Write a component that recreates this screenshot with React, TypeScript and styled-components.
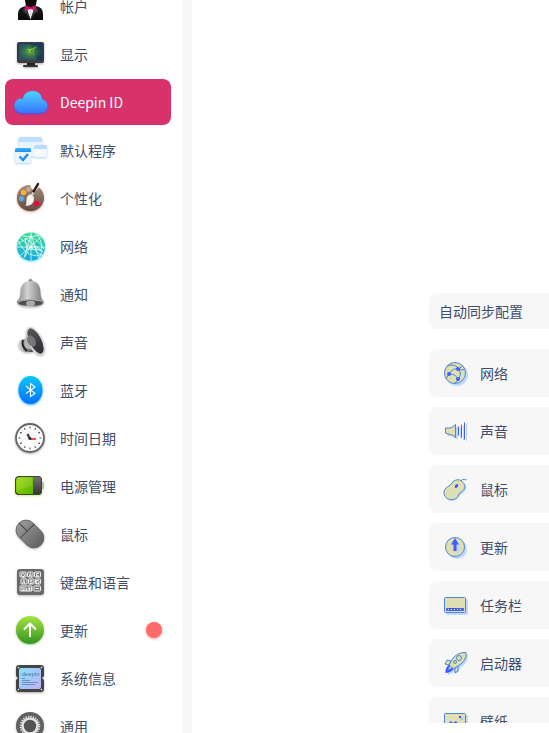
import React from "react";
import styled, { createGlobalStyle } from "styled-components";

const GlobalStyle = createGlobalStyle`
  * { box-sizing: border-box; }
  body {
    margin: 0;
    background: #fff;
    color: #414d68;
    font-family: "Noto Sans CJK SC", "Noto Sans", sans-serif;
    font-size: 14px;
    line-height: 19px;
  }
`;

const Page = styled.div`
  display: flex;
  height: 100vh;
  overflow: hidden;
`;

const Sidebar = styled.nav`
  flex: 0 0 192px;
  padding: 0 11px 0 5px;
  border-right: 10px solid #f7f7f7;
  overflow: hidden;
`;

const ModuleList = styled.ul`
  display: flex;
  flex-direction: column;
  gap: 2px;
  margin: -17px 0 0;
  padding: 0;
  list-style: none;
`;

const ModuleButton = styled.button<{ $active: boolean }>`
  display: flex;
  align-items: center;
  gap: 12px;
  width: 100%;
  height: 46px;
  padding: 0 9px 0 7px;
  border: 0;
  border-radius: 8px;
  background: ${(p) => (p.$active ? "#d9326b" : "transparent")};
  color: ${(p) => (p.$active ? "#fff" : "inherit")};
  font: inherit;
  text-align: left;
`;

const ModuleIcon = styled.svg`
  flex: none;
  width: 36px;
  height: 36px;
  overflow: visible;
`;

const Shaded = styled.g<{ $shadow: string }>`
  filter: drop-shadow(0 1px 1px ${(p) => p.$shadow});
`;

const Badge = styled.span`
  width: 16px;
  height: 16px;
  margin-left: auto;
  border-radius: 50%;
  background: #ff6a6a;
  box-shadow: 0 1px 3px #ff6a6a99;
`;

const Content = styled.main`
  flex: 1;
  min-width: 0;
  padding: 293px 0 0 237px;
  margin-bottom: 10px;
  overflow: hidden;
`;

const SyncTitle = styled.h2`
  display: flex;
  align-items: center;
  height: 36px;
  margin: 0 0 20px;
  padding: 0 10px;
  border-radius: 8px 0 0 8px;
  background: #f7f7f7;
  font-size: 14px;
  font-weight: 400;
  white-space: nowrap;
`;

const SyncList = styled.ul`
  display: flex;
  flex-direction: column;
  gap: 10px;
  margin: 0;
  padding: 0;
  list-style: none;
`;

const SyncRow = styled.li`
  display: flex;
  align-items: center;
  gap: 12px;
  height: 48px;
  padding-left: 15px;
  border-radius: 8px 0 0 8px;
  background: #f7f7f7;
  white-space: nowrap;
`;

const SyncIcon = styled.svg`
  flex: none;
  width: 24px;
  height: 24px;
  overflow: visible;
`;

type GradientProps = { id: string; from: string; to: string; diagonal?: boolean };

const Gradient = ({ id, from, to, diagonal }: GradientProps) => (
  <linearGradient id={id} x1="0" y1="0" x2={diagonal ? "1" : "0"} y2="1">
    <stop stopColor={from} />
    <stop offset="1" stopColor={to} />
  </linearGradient>
);

const AccountArt = (
  <g>
    <Gradient id="suit" from="#333" to="#080808" />
    <path d="M13 4h12v8q-1 4-1 6 7 1 7 8v6H6v-6q0-7 8-8 0-3-1-6z" fill="url(#suit)" />
    <path d="M14.500 20L18.500 31.500 22.500 20z" fill="#eee" />
    <path d="M12 20l-1 4 3 1 4.500 7-4-12zM25 20l1 4-3 1-4.500 7 4-12z" fill="#3a3a3a" />
    <path d="M13 17v6l5.500-2 5.500 2v-6l-5.500 2z" fill="#d90f69" />
    <path d="M13 12h11l-1 5-4.500 2.500L14 17z" fill="#0c0c0c" />
    <path d="M18.500 23v5" stroke="#aaa" strokeWidth="1" strokeDasharray="1 2" />
  </g>
);

const DisplayArt = (
  <Shaded $shadow="#0005">
    <radialGradient id="screen">
      <stop stopColor="#5da23c" />
      <stop offset=".5" stopColor="#2b6b43" />
      <stop offset="1" stopColor="#1b3a5c" />
    </radialGradient>
    <path d="M15 26h8v3h-8z" fill="#222" />
    <rect x="11" y="29" width="15" height="2" rx="1" fill="#333" />
    <rect x="5" y="6" width="27" height="21" rx="2" fill="#3b3d3f" />
    <rect x="6.500" y="7.500" width="24" height="16.500" fill="url(#screen)" />
    <path d="M7 8h11l7 16H7z" fill="#a5ed8d" opacity=".13" />
    <path d="M25 10l-4 5 1 5-3-4-4 1 3-2-4-2 5 0z" fill="#83c83f" />
    <path d="M24 10l-4 5 2 5-3-5z" fill="#26343e" />
  </Shaded>
);

const CloudArt = (
  <Shaded $shadow="#315bea">
    <Gradient id="cloud" from="#4bd6fb" to="#3974ff" />
    <path d="M9 29a7.300 7.300 0 0 1-.5-14.500q1 0 2.500.3C11.500 10 15.500 7 20.500 7c5.500 0 9 3 9.700 8.200A7 7 0 0 1 28.500 29z" fill="url(#cloud)" />
  </Shaded>
);

const DefaultAppsArt = (
  <Shaded $shadow="#75b8ed99">
    <Gradient id="tick-bar" from="#38b4ff" to="#208cf7" />
    <rect x="6.500" y="5" width="23.500" height="19" rx="2" fill="#eaf4ff" />
    <path d="M6.500 10V7a2 2 0 0 1 2-2H28a2 2 0 0 1 2 2v3z" fill="#bddfff" />
    <rect x="22" y="13" width="13" height="12" rx="1.500" fill="#f4f8ff" />
    <path d="M22 17v-2.500a1.500 1.500 0 0 1 1.500-1.500h10a1.500 1.500 0 0 1 1.500 1.500V17z" fill="#b9dcff" />
    <rect x="3" y="16" width="16" height="15" rx="1.500" fill="#e9f4ff" />
    <path d="M3 20v-2.500A1.500 1.500 0 0 1 4.500 16h13a1.500 1.500 0 0 1 1.500 1.500V20z" fill="url(#tick-bar)" />
    <path d="M7.500 24.500l3.500 3.500 5-6" fill="none" stroke="#158ff8" strokeWidth="2.300" />
  </Shaded>
);

const PaletteArt = (
  <Shaded $shadow="#b4483099">
    <Gradient id="wood" from="#a88d78" to="#604b40" />
    <path d="M18 5C10 5 5 10.500 5 18c0 7.500 6 13 13.500 13S32 25 32 18c0-5-2-8-5-10.500-2 3-4 4-6 2.500q-3-2-3-5z" fill="url(#wood)" />
    <circle cx="11.500" cy="12.500" r="2.700" fill="#f5b52d" />
    <circle cx="16.500" cy="9.500" r="2.400" fill="#c9a793" />
    <circle cx="9.500" cy="18.500" r="2.600" fill="#58aaf2" />
    <circle cx="24.500" cy="23.500" r="2.700" fill="#e10b40" />
    <path d="M26 4l-6 10" stroke="#181818" strokeWidth="2.200" strokeLinecap="round" />
    <path d="M21.500 12.500l-2 3" stroke="#ccc" strokeWidth="2.500" />
    <path d="M17.500 14.500q4 .5 4.500 3.500c0 5-3 8-8.500 8q1-2 1-6 0-4 3-5.500z" fill="#f5f1ed" />
  </Shaded>
);

const NetworkArt = (
  <Shaded $shadow="#62dfe9">
    <Gradient id="globe" from="#3cdf92" to="#12a7e5" />
    <clipPath id="globe-edge"><circle cx="19" cy="18.500" r="14" /></clipPath>
    <circle cx="19" cy="18.500" r="14" fill="url(#globe)" />
    <g clipPath="url(#globe-edge)" fill="none" stroke="#e6fff5" strokeWidth=".8">
      <path d="M5 19h28M19 4v29M19 7l-7 23M19 7l8 24M8 10l22 18M30 8L8 28M10 8q14-1 22 13M5 17q10-9 25-10M6 13q10 20 26 13M22 4q13 10 5 27M13 10l16 12-14-1zM13 29l6-12 12 7" />
    </g>
    <circle cx="19" cy="19" r="1.500" fill="#fff" />
  </Shaded>
);

const BellArt = (
  <Shaded $shadow="#0004">
    <linearGradient id="bell">
      <stop stopColor="#898989" />
      <stop offset=".4" stopColor="#d2d2d2" />
      <stop offset="1" stopColor="#777" />
    </linearGradient>
    <circle cx="18.500" cy="5" r="2" fill="#888" />
    <path d="M18.500 5C11 5 8.500 10 8.500 17q0 5-3.500 8v2q3 4 13.500 4t13-4v-2q-3-3-3-8c0-7-2.500-12-10-12z" fill="url(#bell)" />
    <ellipse cx="18.500" cy="27" rx="12" ry="3" fill="#4d4d4d" />
    <ellipse cx="18.500" cy="27.500" rx="4.500" ry="3" fill="#aaa" />
    <path d="M6 25q12-3 25 0" fill="none" stroke="#aaa" />
  </Shaded>
);

const SoundArt = (
  <Shaded $shadow="#0005">
    <linearGradient id="magnet">
      <stop stopColor="#ddd" />
      <stop offset=".6" stopColor="#888" />
      <stop offset="1" stopColor="#333" />
    </linearGradient>
    <Gradient id="cone" from="#55575a" to="#2c2d2f" />
    <path d="M13 15l-5 1q-3 5 0 9l5 3 8 0z" fill="url(#magnet)" />
    <path d="M11 16q-2 6 4 11" fill="none" stroke="#222" strokeWidth="2" />
    <path d="M16.500 4q-3 7-3.500 14-1 4 1 6 8 2 15 6z" fill="#b5b5b5" />
    <ellipse cx="23.500" cy="17" rx="6.500" ry="14.500" transform="rotate(-27 23.500 17)" fill="url(#cone)" stroke="#ddd" strokeWidth="1.300" />
    <ellipse cx="19.500" cy="17" rx="4" ry="6" transform="rotate(-27 19.500 17)" fill="#75777a" />
  </Shaded>
);

const BluetoothArt = (
  <Shaded $shadow="#35a9ff">
    <Gradient id="tooth" from="#08c8fb" to="#0870ff" />
    <ellipse cx="18.500" cy="18" rx="12" ry="14" fill="url(#tooth)" />
    <path d="M14 14l9 7.500-4.500 3v-13L23 15l-9 6.500" fill="none" stroke="#fff" strokeWidth="1.100" />
  </Shaded>
);

const ClockArt = (
  <Shaded $shadow="#0005">
    <circle cx="18" cy="18" r="14" fill="#fbfbfb" stroke="#666" strokeWidth="1.800" />
    {Array.from({ length: 12 }, (_, i) => (
      <path key={i} d="M18 6.500v2" stroke="#444" strokeWidth=".9" transform={`rotate(${i * 30} 18 18)`} />
    ))}
    <path d="M18 19l-2.500-5" stroke="#3c4145" strokeWidth="2.300" />
    <path d="M18 19h6" stroke="#ff4b4b" strokeWidth="2" />
    <circle cx="18" cy="18.500" r="1.500" fill="#333" />
  </Shaded>
);

const BatteryArt = (
  <Shaded $shadow="#a9d94599">
    <Gradient id="charge" from="#98d900" to="#58b500" diagonal />
    <Gradient id="case" from="#777" to="#333" />
    <rect x="28" y="14" width="4" height="7" rx="1" fill="#bbb" />
    <rect x="3" y="8" width="27" height="19" rx="4" fill="url(#case)" />
    <path d="M7 9h14v17H7q-3 0-3-3V12q0-3 3-3z" fill="url(#charge)" />
    <path d="M5 12q0-2 2-2h13v8L5 22z" fill="#fff" opacity=".12" />
    <rect x="3.500" y="8.500" width="26" height="18" rx="3.500" fill="none" stroke="#424834" />
  </Shaded>
);

const MouseArt = (
  <Shaded $shadow="#0004">
    <Gradient id="mouse" from="#999" to="#626262" />
    <g transform="rotate(-45 18 18)">
      <rect x="8" y="2.500" width="20" height="31" rx="10" fill="url(#mouse)" stroke="#606060" strokeWidth=".8" />
      <path d="M8 14h20M18 3v11" fill="none" stroke="#444" strokeWidth="1" />
    </g>
  </Shaded>
);

const KeyboardArt = (
  <Shaded $shadow="#0004">
    <rect x="5" y="5" width="27" height="26" rx="3" fill="#6a6a6a" />
    <g fill="#737373" stroke="#f2f2f2" strokeWidth="1">
      <rect x="8" y="8" width="6" height="5" rx=".5" />
      <rect x="15.500" y="8" width="5.500" height="5" rx=".5" />
      <rect x="22.500" y="8" width="6" height="5" rx=".5" />
      <rect x="9" y="15" width="6" height="5" rx=".5" />
      <rect x="16.500" y="15" width="5.500" height="5" rx=".5" />
      <rect x="23.500" y="15" width="5" height="5" rx=".5" />
      <rect x="8" y="22" width="12" height="5" rx=".5" />
      <rect x="22" y="22" width="6.500" height="5" rx=".5" />
    </g>
    <g fill="#fff" fontFamily="Liberation Sans" fontSize="5" fontWeight="700">
      <text x="9" y="12.500">Q</text>
      <text x="16.500" y="12.500">A</text>
      <text x="24" y="12.500">E</text>
      <text x="10" y="19.500">A</text>
      <text x="17.500" y="19.500">S</text>
      <text x="24" y="19.500">D</text>
      <text x="9" y="26.500">Shift</text>
    </g>
    <path d="M23.500 24.500H27" stroke="#fff" />
  </Shaded>
);

const UpdateArt = (
  <Shaded $shadow="#50b02d88">
    <Gradient id="update" from="#a6e442" to="#329323" />
    <circle cx="18" cy="18" r="14" fill="url(#update)" />
    <path d="M18 25V12M12 17.500l6-6 6 6" fill="none" stroke="#fff" strokeWidth="2" />
  </Shaded>
);

const SystemArt = (
  <Shaded $shadow="#0005">
    <Gradient id="chip" from="#82e1f7" to="#c4b0fa" diagonal />
    <path d="M7 5h22q3 0 3 3v8l-2 2 2 2v9q0 3-3 3H7q-3 0-3-3v-9l2-2-2-2V8q0-3 3-3z" fill="#454545" />
    <rect x="7" y="8" width="22" height="21" rx="2" fill="url(#chip)" />
    <g fill="#eee">
      <circle cx="6.500" cy="7.500" r=".8" />
      <circle cx="29.500" cy="7.500" r=".8" />
      <circle cx="6.500" cy="29.500" r=".8" />
      <circle cx="29.500" cy="29.500" r=".8" />
    </g>
    <text x="9.500" y="16" fill="#467b9b" fontFamily="Liberation Sans" fontSize="6">deepin</text>
    <path d="M10 18.500h3M10 20.500h8M10 22.500h16M10 24.500h13" stroke="#5978a4" strokeWidth=".7" />
  </Shaded>
);

const GeneralArt = (
  <Shaded $shadow="#0004">
    <circle cx="18" cy="18" r="14" fill="#606060" />
    <circle cx="18" cy="18" r="9.500" fill="none" stroke="#eee" strokeWidth="1.600" strokeDasharray="1.300 1.190" />
    <circle cx="18" cy="18" r="7.500" fill="#555" stroke="#e3e3e3" strokeWidth="2.600" />
  </Shaded>
);

const modules = [
  { label: "帐户", art: AccountArt },
  { label: "显示", art: DisplayArt },
  { label: "Deepin ID", art: CloudArt, active: true },
  { label: "默认程序", art: DefaultAppsArt },
  { label: "个性化", art: PaletteArt },
  { label: "网络", art: NetworkArt },
  { label: "通知", art: BellArt },
  { label: "声音", art: SoundArt },
  { label: "蓝牙", art: BluetoothArt },
  { label: "时间日期", art: ClockArt },
  { label: "电源管理", art: BatteryArt },
  { label: "鼠标", art: MouseArt },
  { label: "键盘和语言", art: KeyboardArt },
  { label: "更新", art: UpdateArt, badge: true },
  { label: "系统信息", art: SystemArt },
  { label: "通用", art: GeneralArt },
];

const line = { fill: "#dfdfb5", stroke: "#4c89cb", strokeWidth: 1 };
const cast = { fill: "#bfd8ff" };

const syncItems = [
  {
    label: "网络",
    art: (
      <>
        <circle cx="13" cy="14" r="11" {...cast} />
        <circle cx="11" cy="12" r="10.500" {...line} />
        <path d="M5 13Q9 6 15 8.500M5 13q7 0 9 5M15 8.500q3 4 0 10M3 5q9-3 12 3.500 3 1 5 0M5 13l-3 5M14 18.500q-1 3-4 4M15 8.500l3-4" fill="none" stroke="#4c89cb" />
        <g fill="#405bff">
          <circle cx="5" cy="13" r="2" />
          <circle cx="14" cy="8" r="2" />
          <circle cx="14" cy="18" r="2" />
        </g>
      </>
    ),
  },
  {
    label: "声音",
    art: (
      <>
        <path d="M3 11h5l6-4v14l-6-4H3z" {...cast} />
        <path d="M16.500 9v11M19.500 7v14M22.500 5v17" stroke="#bfd8ff" />
        <path d="M1.500 9H6q3-1 5.500-3.500v13Q9 16 6 15.500L1.500 14z" {...line} />
        <path d="M14.500 7.500v9M17.500 5.500v13M20.500 3.500v17" stroke="#405bff" />
      </>
    ),
  },
  {
    label: "鼠标",
    art: (
      <>
        <path d="M11 5q-2 3-6 5c-5 3-5 9-2 12s9 3 12-2q1-2 5-5 4-3 2-7-5-6-11-3z" {...cast} />
        <path d="M9 4.500q-1 3-5 5c-5 3-5 8-2 11s9 3 12-1q0-3 4-5c4-3 3-7 1-9-3-4-7-3-10-1z" {...line} />
        <path d="M17 4q1-2 3-1.500t2.500 0" fill="none" stroke="#4c89cb" />
        <ellipse cx="12.500" cy="9" rx="1.400" ry="2.200" transform="rotate(40 12.500 9)" fill="#405bff" />
      </>
    ),
  },
  {
    label: "更新",
    art: (
      <>
        <circle cx="13" cy="14" r="10" {...cast} />
        <circle cx="11" cy="12" r="9.500" {...line} />
        <path d="M12 18v-7h-2l3-5 3 5h-1v7z" {...cast} />
        <path d="M9.500 16V9.500H7L11 3l4 6.500h-2.500V16z" fill="#405bff" />
      </>
    ),
  },
  {
    label: "任务栏",
    art: (
      <>
        <rect x="2" y="6" width="22" height="16" rx="1" {...cast} />
        <rect x=".5" y="4.500" width="21" height="15" rx="1" {...line} />
        <rect x="2" y="15" width="18" height="3" rx="1" fill="#405bff" />
        <path d="M4 16.500h14" stroke="#fff" strokeDasharray="1 2" />
      </>
    ),
  },
  {
    label: "启动器",
    art: (
      <>
        <path d="M24 3q-8 0-12 6l-6 2-2 3 4 1-4 6v3l6-3 4 1 2-5q9-5 8-14z" {...cast} />
        <path d="M7 10L3 9 1 13l4 1zM14 15v5l-3 2v-5z" {...line} />
        <path d="M22 1.500Q12 1 7 10l-2 5 4 3 5-3Q23 10 22 1.500z" {...line} />
        <circle cx="15" cy="7" r="2.500" {...line} />
        <circle cx="11" cy="11" r="1.500" {...line} />
        <path d="M4.500 14Q1 17 1.500 22q5 0 8-4-2-3-5-4z" fill="#405bff" />
        <path d="M6 15l-2 4 4-2z" fill="#f1f4ff" stroke="#4c89cb" strokeWidth=".7" />
      </>
    ),
  },
  {
    label: "壁纸",
    art: (
      <>
        <rect x="2" y="6" width="22" height="18" rx="1" {...cast} />
        <rect x=".5" y="4.500" width="21" height="17" rx="1" {...line} />
        <path d="M4 16l2.500-4L9 14l3-2 3 4v4H4z" fill="#405bff" />
        <circle cx="16" cy="8" r="1.200" fill="#405bff" />
        <circle cx="18" cy="10" r="1" fill="#93baf7" />
      </>
    ),
  },
];

export default function App() {
  return (
    <>
      <GlobalStyle />
      <Page>
        <Sidebar aria-label="控制中心">
          <ModuleList>
            {modules.map(({ label, art, active = false, badge }) => (
              <li key={label}>
                <ModuleButton type="button" $active={active} aria-current={active ? "page" : undefined}>
                  <ModuleIcon viewBox="0 0 36 36" aria-hidden="true">{art}</ModuleIcon>
                  <span>{label}</span>
                  {badge && <Badge />}
                </ModuleButton>
              </li>
            ))}
          </ModuleList>
        </Sidebar>
        <Content>
          <SyncTitle>自动同步配置</SyncTitle>
          <SyncList>
            {syncItems.map(({ label, art }) => (
              <SyncRow key={label}>
                <SyncIcon viewBox="0 0 24 24" aria-hidden="true">{art}</SyncIcon>
                <span>{label}</span>
              </SyncRow>
            ))}
          </SyncList>
        </Content>
      </Page>
    </>
  );
}
